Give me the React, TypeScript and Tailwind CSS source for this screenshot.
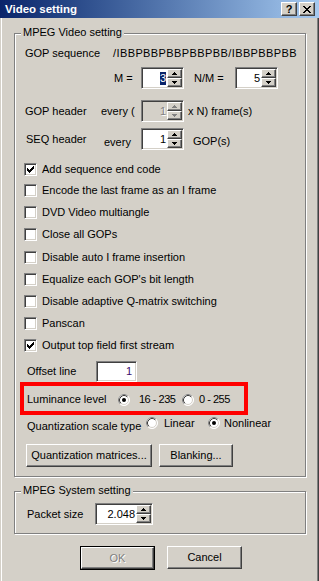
import React from "react";

const PIX_CHECK = ["......X", ".....XX", "X...XXX", "XX.XXX.", "XXXXX..", ".XXX...", "..X...."];
const PIX_CLOSE = ["XX....XX", ".XX..XX.", "..XXXX..", "...XX...", "..XXXX..", ".XX..XX.", "XX....XX"];
const PIX_UP = ["..X..", ".XXX.", "XXXXX"];
const PIX_DOWN = ["XXXXX", ".XXX.", "..X.."];

function Pixels({ rows, color }: { rows: string[]; color: string }) {
  const w = rows[0].length;
  const h = rows.length;
  const rects: React.ReactNode[] = [];
  rows.forEach((r, y) =>
    r.split("").forEach((c, x) => {
      if (c === "X") rects.push(<rect key={`${x}-${y}`} x={x} y={y} width={1} height={1} fill={color} />);
    })
  );
  return (
    <svg width={w} height={h} viewBox={`0 0 ${w} ${h}`} shapeRendering="crispEdges" className="block">
      {rects}
    </svg>
  );
}

function Raised({ className = "", children }: { className?: string; children?: React.ReactNode }) {
  return (
    <div
      className={`flex items-center justify-center bg-[#d4d0c8] border border-t-white border-l-white border-r-[#404040] border-b-[#404040] shadow-[inset_-1px_-1px_0_#808080] ${className}`}
    >
      {children}
    </div>
  );
}

const SUNKEN =
  "border border-t-[#808080] border-l-[#808080] border-r-white border-b-white shadow-[inset_1px_1px_0_#404040,inset_-1px_-1px_0_#d4d0c8]";

function Spin({
  w,
  value,
  sel = false,
  disabled = false,
}: {
  w: string;
  value: string;
  sel?: boolean;
  disabled?: boolean;
}) {
  const arrowColor = disabled ? "#808080" : "#000000";
  return (
    <div className={`flex h-[22px] p-[1px] ${w} ${SUNKEN} ${disabled ? "bg-[#d4d0c8]" : "bg-white"}`}>
      <div className="flex flex-1 items-center justify-end pr-[1px]">
        <span
          className={`leading-[13px] ${
            sel ? "bg-[#0a246a] text-white" : disabled ? "text-[#808080] [text-shadow:1px_1px_0_#fff]" : "text-black"
          }`}
        >
          {value}
        </span>
      </div>
      <div className="flex w-[15px] flex-col">
        <Raised className="h-[9px] w-[15px]">
          <Pixels rows={PIX_UP} color={arrowColor} />
        </Raised>
        <Raised className="h-[9px] w-[15px]">
          <Pixels rows={PIX_DOWN} color={arrowColor} />
        </Raised>
      </div>
    </div>
  );
}

function Check({ checked = false }: { checked?: boolean }) {
  return (
    <div className={`h-[13px] w-[13px] shrink-0 bg-white p-[2px] ${SUNKEN}`}>
      {checked && <Pixels rows={PIX_CHECK} color="#000000" />}
    </div>
  );
}

function Radio({ checked = false }: { checked?: boolean }) {
  return (
    <svg width={12} height={12} viewBox="0 0 12 12" className="block shrink-0">
      <circle cx={6} cy={6} r={5.5} fill="white" stroke="#ffffff" strokeWidth={1} />
      <path d="M2.11 9.89 A5.5 5.5 0 0 1 9.89 2.11" fill="none" stroke="#808080" strokeWidth={1} />
      <circle cx={6} cy={6} r={4.5} fill="white" stroke="#d4d0c8" strokeWidth={1} />
      <path d="M2.82 9.18 A4.5 4.5 0 0 1 9.18 2.82" fill="none" stroke="#404040" strokeWidth={1} />
      {checked && <circle cx={6} cy={6} r={2} fill="#000000" />}
    </svg>
  );
}

function Group({ label, className = "", children }: { label: string; className?: string; children?: React.ReactNode }) {
  return (
    <div className={`relative border border-[#808080] shadow-[inset_1px_1px_0_#fff,1px_1px_0_#fff] ${className}`}>
      <span className="absolute left-[6px] top-[-8px] bg-[#d4d0c8] px-[2px] leading-[13px] whitespace-nowrap">
        {label}
      </span>
      {children}
    </div>
  );
}

function CheckRow({ h, label, checked = false }: { h: string; label: string; checked?: boolean }) {
  return (
    <div className={`flex items-center ${h}`}>
      <Check checked={checked} />
      <span className="ml-[5px] whitespace-nowrap">{label}</span>
    </div>
  );
}

export default function App() {
  return (
    <div className="flex h-[581px] w-[319px] flex-col overflow-hidden bg-[#d4d0c8] font-['Liberation_Sans',Arial,sans-serif] text-[11px] leading-[13px] text-black">
      {/* Title bar */}
      <div className="flex h-[18px] shrink-0 items-center bg-gradient-to-r from-[#0a246a] to-[#a6caf0] pl-[5px] pr-[4px]">
        <span className="text-[11.5px] font-bold text-white">Video setting</span>
        <div className="ml-auto flex gap-[2px]">
          <Raised className="h-[14px] w-[16px]">
            <span className="text-[11px] font-bold leading-[11px] text-black">?</span>
          </Raised>
          <Raised className="h-[14px] w-[16px]">
            <Pixels rows={PIX_CLOSE} color="#000000" />
          </Raised>
        </div>
      </div>

      {/* Body */}
      <div className="flex flex-1 flex-col shadow-[inset_1px_0_0_#d4d0c8,inset_2px_0_0_#fff,inset_-1px_0_0_#404040,inset_-2px_0_0_#808080]">
        <Group label="MPEG Video setting" className="ml-[14px] mt-[15px] w-[292px] pb-[9px] pl-[9px]">
          {/* GOP sequence */}
          <div className="mt-[9px] flex h-[20px] items-center">
            <span className="w-[89px] shrink-0 pl-[1px] whitespace-nowrap">GOP sequence</span>
            <span className="whitespace-nowrap tracking-[0.4px]">/IBBPBBPBBPBBPBB/IBBPBBPBB</span>
          </div>
          {/* M, N/M */}
          <div className="mt-[4px] flex h-[22px] items-center">
            <span className="ml-[90px] w-[27px] shrink-0">M =</span>
            <Spin w="w-[43px]" value="3" sel />
            <span className="ml-[10px] w-[41px] shrink-0">N/M =</span>
            <Spin w="w-[43px]" value="5" />
          </div>
          {/* GOP header */}
          <div className="mt-[11px] flex h-[22px] items-center">
            <span className="w-[77px] shrink-0 pl-[1px] whitespace-nowrap">GOP header</span>
            <span className="w-[40px] shrink-0 whitespace-nowrap">every (</span>
            <Spin w="w-[43px]" value="1" disabled />
            <span className="ml-[4px] whitespace-nowrap">x N) frame(s)</span>
          </div>
          {/* SEQ header */}
          <div className="mt-[6px] flex h-[22px] items-center">
            <span className="w-[80px] shrink-0 pl-[2px] whitespace-nowrap">SEQ header</span>
            <span className="w-[37px] shrink-0 pt-[7px]">every</span>
            <Spin w="w-[43px]" value="1" />
            <span className="ml-[9px] pt-[5px] whitespace-nowrap">GOP(s)</span>
          </div>
          {/* Checkboxes */}
          <div className="mt-[9px] flex flex-col">
            <CheckRow h="h-[21px]" label="Add sequence end code" checked />
            <CheckRow h="h-[21px]" label="Encode the last frame as an I frame" />
            <CheckRow h="h-[22px]" label="DVD Video multiangle" />
            <CheckRow h="h-[23px]" label="Close all GOPs" />
            <CheckRow h="h-[22px]" label="Disable auto I frame insertion" />
            <CheckRow h="h-[22px]" label="Equalize each GOP's bit length" />
            <CheckRow h="h-[22px]" label="Disable adaptive Q-matrix switching" />
            <CheckRow h="h-[22px]" label="Panscan" />
            <CheckRow h="h-[23px]" label="Output top field first stream" checked />
          </div>
          {/* Offset line */}
          <div className="mt-[4px] flex h-[21px] items-center">
            <span className="w-[72px] shrink-0 pl-[3px] whitespace-nowrap">Offset line</span>
            <div className={`flex h-[21px] w-[41px] items-center justify-end bg-white pr-[4px] ${SUNKEN}`}>
              <span className="text-[#3d0d6d]">1</span>
            </div>
          </div>
          {/* Luminance level (highlighted) */}
          <div className="-ml-[4px] flex h-[33px] w-[228px] items-center border-4 border-[#ff0000] pt-[2px]">
            <span className="w-[94px] shrink-0 pl-[3px] whitespace-nowrap">Luminance level</span>
            <div className="flex w-[64px] shrink-0 items-center">
              <Radio checked />
              <span className="ml-[9px] whitespace-nowrap tracking-[-0.5px]">16 - 235</span>
            </div>
            <div className="flex items-center">
              <Radio />
              <span className="ml-[5px] whitespace-nowrap tracking-[-0.5px]">0 - 255</span>
            </div>
          </div>
          {/* Quantization scale type */}
          <div className="flex h-[22px] items-center">
            <span className="w-[122px] shrink-0 pl-[3px] whitespace-nowrap">Quantization scale type</span>
            <div className="mb-[6px] flex w-[62px] shrink-0 items-center">
              <Radio />
              <span className="ml-[6px] whitespace-nowrap">Linear</span>
            </div>
            <div className="mb-[6px] flex items-center">
              <Radio checked />
              <span className="ml-[4px] whitespace-nowrap">Nonlinear</span>
            </div>
          </div>
          {/* Buttons */}
          <div className="mt-[7px] flex h-[23px]">
            <Raised className="ml-[2px] h-[23px] w-[126px]">
              <span className="whitespace-nowrap">Quantization matrices...</span>
            </Raised>
            <Raised className="ml-[7px] h-[23px] w-[74px]">
              <span className="whitespace-nowrap">Blanking...</span>
            </Raised>
          </div>
        </Group>

        <Group label="MPEG System setting" className="ml-[14px] mt-[14px] w-[292px] pb-[8px] pl-[9px] pt-[11px]">
          <div className="flex h-[22px] items-center">
            <span className="w-[71px] shrink-0 pl-[3px] whitespace-nowrap">Packet size</span>
            <Spin w="w-[58px]" value="2.048" />
          </div>
        </Group>

        {/* OK / Cancel */}
        <div className="ml-[80px] mt-[12px] flex gap-[12px]">
          <div className="h-[24px] w-[75px] border border-black">
            <Raised className="h-full w-full">
              <span className="text-[#808080] [text-shadow:1px_1px_0_#fff]">OK</span>
            </Raised>
          </div>
          <Raised className="h-[23px] w-[75px]">
            <span>Cancel</span>
          </Raised>
        </div>
      </div>
    </div>
  );
}
